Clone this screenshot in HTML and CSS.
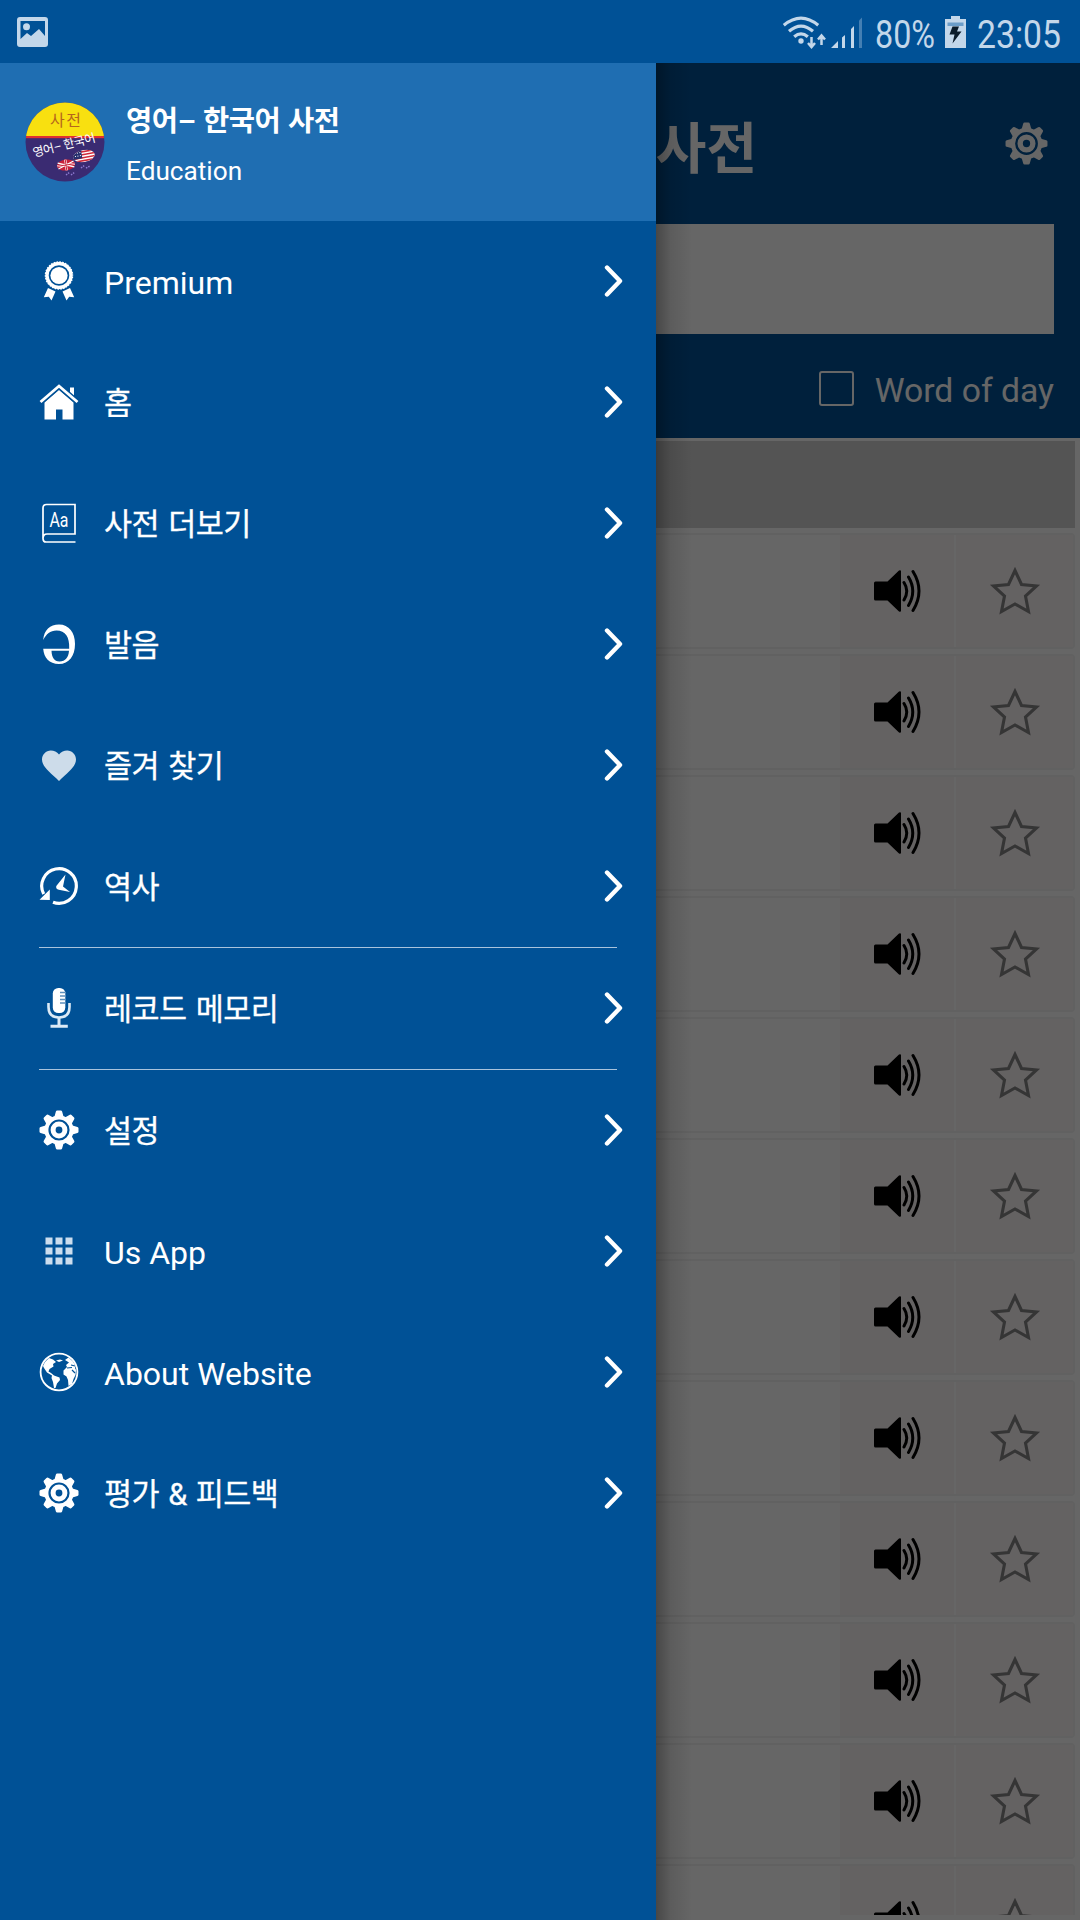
FILE: index.html
```html
<!DOCTYPE html>
<html lang="ko">
<head>
<meta charset="utf-8">
<title>영어– 한국어 사전</title>
<link rel="stylesheet" href="styles.css">
</head>
<body>
<svg class="defs" aria-hidden="true">
  <symbol id="gear" viewBox="0 0 40 40">
    <g fill="currentColor">
      <path id="tooth" d="M14.800 9L16.900 1.600Q17.200.5 18.200.5H21.800Q22.800.5 23.100 1.600L25.200 9Z"/>
      <use href="#tooth" transform="rotate(45 20 20)"/><use href="#tooth" transform="rotate(90 20 20)"/>
      <use href="#tooth" transform="rotate(135 20 20)"/><use href="#tooth" transform="rotate(180 20 20)"/>
      <use href="#tooth" transform="rotate(225 20 20)"/><use href="#tooth" transform="rotate(270 20 20)"/>
      <use href="#tooth" transform="rotate(315 20 20)"/>
    </g>
    <circle cx="20" cy="20" r="12.600" fill="none" stroke="currentColor" stroke-width="4"/>
    <circle cx="20" cy="20" r="5.900" fill="none" stroke="currentColor" stroke-width="5"/>
  </symbol>
  <symbol id="chevron" viewBox="0 0 20 34">
    <path d="M4 3.500L17 17 4 30.500" fill="none" stroke="currentColor" stroke-width="4.400" stroke-linecap="round" stroke-linejoin="round"/>
  </symbol>
  <symbol id="speaker" viewBox="0 0 50 44">
    <path d="M2.500 12.500H14.500L26 1.500Q28 .5 28 2.500V41.500Q28 43.500 26 42.500L14.500 31.500H2.500Q1 31.500 1 30V14Q1 12.500 2.500 12.500Z"/>
    <path d="M31 13.500Q36.500 22 31 31M35.500 8Q44 22 35.500 36.500M40 2.500Q52 22 40 41.500" fill="none" stroke="#000" stroke-width="3" stroke-linecap="round"/>
  </symbol>
  <symbol id="star" viewBox="0 0 52 50">
    <path d="M26 4.500L32.500 18.500 47.500 20 36.500 30 39.500 45.500 26 38 12.500 45.500 15.500 30 4.500 20 19.500 18.500Z" fill="none" stroke="#858585" stroke-width="3.100" stroke-miterlimit="10"/>
  </symbol>
</svg>

<header class="status">
  <svg class="status-photo" viewBox="0 0 32 30" width="32" height="30">
    <path fill="currentColor" fill-rule="evenodd" d="M3 0H28Q31 0 31 3V27Q31 30 28 30H3Q0 30 0 27V3Q0 0 3 0ZM3.500 4V22L10 16 14 19 22 12 28 19V4Z"/>
    <circle cx="9.500" cy="9.800" r="3.500" fill="currentColor"/>
  </svg>
  <div class="status-right">
    <svg viewBox="0 0 42 32" width="42" height="32">
      <g fill="none" stroke="currentColor" stroke-width="3.200">
        <path d="M.8 8.200Q18-6 35.200 8.200M6 14.300Q18 4 30 14.300M11.200 19.800Q18 14 24.800 19.800"/>
      </g>
      <circle cx="18" cy="24" r="2.700" fill="currentColor"/>
      <path d="M28.500 20V29M25 26L28.500 30 32 26M38.500 28V19.500M35 22.500L38.500 18.500 42 22.500" fill="none" stroke="currentColor" stroke-width="2.500"/>
    </svg>
    <svg class="signal" viewBox="0 0 32 31" width="32" height="31">
      <path fill="currentColor" d="M0 31L7 24V31ZM11 20.500L14 18V31H11ZM20 12L23 9V31H20Z"/>
      <path fill="currentColor" opacity=".35" d="M28 3.500L31 .5V31H28Z"/>
    </svg>
    <svg class="battery-text" width="61" height="52"><text x="0" y="37" textLength="60" lengthAdjust="spacingAndGlyphs">80%</text></svg>
    <svg class="battery" viewBox="0 0 21 32" width="21" height="32">
      <path fill="currentColor" d="M6 0H15V3H21V32H0V3H6Z"/>
      <path fill="#6b9dc9" d="M2.500 6.500H18.500V10H2.500Z"/>
      <path fill="#0b1c2b" d="M7.500 10.500H14L12 15.500H16.500L7.500 27.500 9.500 18.500H4.500Z"/>
    </svg>
    <svg class="clock" width="85" height="52"><text x="0" y="37" textLength="84" lengthAdjust="spacingAndGlyphs">23:05</text></svg>
  </div>
</header>

<div class="screen">
  <main class="page">
    <section class="top">
      <div class="title-row"><h1>영어– 한국어 사전</h1><svg class="top-gear"><use href="#gear"/></svg></div>
      <div class="search"></div>
      <label class="word-day"><span class="box"></span>Word of day</label>
    </section>
    <section class="list">
      <div class="list-head"></div>
      <div class="row"><div class="word"></div><div class="btn say"><svg><use href="#speaker"/></svg></div><div class="btn fav"><svg><use href="#star"/></svg></div></div>
      <div class="row"><div class="word"></div><div class="btn say"><svg><use href="#speaker"/></svg></div><div class="btn fav"><svg><use href="#star"/></svg></div></div>
      <div class="row"><div class="word"></div><div class="btn say"><svg><use href="#speaker"/></svg></div><div class="btn fav"><svg><use href="#star"/></svg></div></div>
      <div class="row"><div class="word"></div><div class="btn say"><svg><use href="#speaker"/></svg></div><div class="btn fav"><svg><use href="#star"/></svg></div></div>
      <div class="row"><div class="word"></div><div class="btn say"><svg><use href="#speaker"/></svg></div><div class="btn fav"><svg><use href="#star"/></svg></div></div>
      <div class="row"><div class="word"></div><div class="btn say"><svg><use href="#speaker"/></svg></div><div class="btn fav"><svg><use href="#star"/></svg></div></div>
      <div class="row"><div class="word"></div><div class="btn say"><svg><use href="#speaker"/></svg></div><div class="btn fav"><svg><use href="#star"/></svg></div></div>
      <div class="row"><div class="word"></div><div class="btn say"><svg><use href="#speaker"/></svg></div><div class="btn fav"><svg><use href="#star"/></svg></div></div>
      <div class="row"><div class="word"></div><div class="btn say"><svg><use href="#speaker"/></svg></div><div class="btn fav"><svg><use href="#star"/></svg></div></div>
      <div class="row"><div class="word"></div><div class="btn say"><svg><use href="#speaker"/></svg></div><div class="btn fav"><svg><use href="#star"/></svg></div></div>
      <div class="row"><div class="word"></div><div class="btn say"><svg><use href="#speaker"/></svg></div><div class="btn fav"><svg><use href="#star"/></svg></div></div>
      <div class="row"><div class="word"></div><div class="btn say"><svg><use href="#speaker"/></svg></div><div class="btn fav"><svg><use href="#star"/></svg></div></div>
    </section>
  </main>
  <div class="scrim"></div>

  <nav class="drawer">
    <div class="profile">
      <svg class="avatar" viewBox="0 0 80 80">
        <clipPath id="disc"><circle cx="40" cy="40" r="39.500"/></clipPath>
        <g clip-path="url(#disc)">
          <rect width="80" height="80" fill="#3a2b72"/>
          <rect width="80" height="34" fill="#f8e010"/>
          <rect y="34" width="80" height="2.200" fill="#e03030"/>
        </g>
        <text class="av-top" x="25" y="23.500" textLength="31">사전</text>
        <text class="av-name" x="9" y="55" textLength="64" transform="rotate(-14 9 55)">영어– 한국어</text>
        <g transform="rotate(-8 41 63)">
          <ellipse cx="41" cy="63" rx="9" ry="5.500" fill="#c8203a"/>
          <path d="M33 60L49 66M33 66L49 60" stroke="#fff" stroke-width="1.200"/>
          <path d="M41 57.500V68.500M32 63H50" stroke="#fff" stroke-width="2.200"/>
          <path d="M41 57.500V68.500M32 63H50" stroke="#c8203a" stroke-width="1"/>
        </g>
        <g transform="rotate(-10 59 54)">
          <clipPath id="us"><ellipse cx="59" cy="54" rx="11" ry="6"/></clipPath>
          <g clip-path="url(#us)"><rect x="48" y="48" width="22" height="12" fill="#fff"/>
          <path d="M48 49.500H70M48 52.500H70M48 55.500H70M48 58.500H70" stroke="#d02a3a" stroke-width="1.500"/>
          <rect x="48" y="48" width="9" height="8" fill="#26306e"/><path d="M50 50H56M50 53H56" stroke="#fff" stroke-dasharray="1 1.500"/></g>
        </g>
        <path d="M41 73L45 70M46 73L50 70M56 66L60 63M61 66L65 64" stroke="#8e7ad0" stroke-width="1.500" stroke-dasharray="1.500 1"/>
      </svg>
      <div><div class="app-name">영어– 한국어 사전</div><div class="category">Education</div></div>
    </div>

    <a class="item"><svg class="icon" viewBox="0 0 40 40">
      <circle cx="20" cy="14.500" r="12.300" fill="none" stroke="#fff" stroke-width="4"/>
      <circle cx="20" cy="14.500" r="14.300" fill="none" stroke="#005196" stroke-width="1.300" stroke-dasharray="1.300 1.700"/>
      <circle cx="20" cy="14.500" r="8.600" fill="#fff"/>
      <path fill="#fff" d="M9 27L16.500 30.500 12.500 39.500 9.800 35.800 4.800 36.300ZM31 27L23.500 30.500 27.500 39.500 30.200 35.800 35.200 36.300Z"/>
    </svg><span>Premium</span><svg class="go"><use href="#chevron"/></svg></a>

    <a class="item"><svg class="icon" viewBox="0 0 40 40">
      <path fill="#fff" d="M31 5.500H35V17L31 13ZM5.500 20.500L20 8 34.500 20.500V37.500H23.500V27.500H17V37.500H5.500Z"/>
      <path d="M1.500 20L20 4 38.500 20" fill="none" stroke="#005196" stroke-width="5.500"/>
      <path d="M1.500 20L20 4 38.500 20" fill="none" stroke="#fff" stroke-width="2.800"/>
    </svg><span class="ko">홈</span><svg class="go"><use href="#chevron"/></svg></a>

    <a class="item"><svg class="icon" viewBox="0 0 40 40">
      <path d="M36.500 39H7Q4 39 4 35.500V5Q4 1.500 7.500 1.500H36V31H8Q4 31 4 35.500" fill="none" stroke="#fff" stroke-width="1.700"/>
      <text class="aa" x="10.500" y="23.500" textLength="19" lengthAdjust="spacingAndGlyphs">Aa</text>
    </svg><span class="ko">사전 더보기</span><svg class="go"><use href="#chevron"/></svg></a>

    <a class="item"><svg class="icon" viewBox="0 0 40 40">
      <path fill="#fff" fill-rule="evenodd" d="M4.200 16C5 6 11 .5 20 .5C30 .5 36 8.500 36 20C36 32 30 40 20 40C10 40 5 34 4.200 24.800H30.200C30.700 13 26.500 6.500 17.500 6.500C11 6.500 7.500 10 4.200 16ZM12.500 26.800C12.800 33.500 15 37.500 20.500 37.500C26.500 37.500 29.500 33.500 30 26.800Z"/>
    </svg><span class="ko">발음</span><svg class="go"><use href="#chevron"/></svg></a>

    <a class="item"><svg class="icon" viewBox="0 0 40 40">
      <path fill="#cddcea" d="M20 36L17.500 33.500C8.500 25.500 3 20.500 3 14.500C3 9.500 7 5.500 11.800 5.500C15 5.500 18 7 20 9.500C22 7 25 5.500 28.200 5.500C33 5.500 37 9.500 37 14.500C37 20.500 31.500 25.500 22.500 33.500Z"/>
    </svg><span class="ko">즐겨 찾기</span><svg class="go"><use href="#chevron"/></svg></a>

    <a class="item"><svg class="icon" viewBox="0 0 40 40">
      <path d="M14 36.200A17.300 17.300 0 1 0 4.700 28" fill="none" stroke="#fff" stroke-width="3.200"/>
      <path fill="#fff" d="M.5 33.800L10.800 23.500V34ZM26.500 8.500L24 20.500 31 26 19.800 23.800Q16.500 23 17.300 20Z"/>
    </svg><span class="ko">역사</span><svg class="go"><use href="#chevron"/></svg></a>

    <hr>
    <a class="item"><svg class="icon" viewBox="0 0 40 40">
      <rect x="13.800" y="0" width="12.500" height="25" rx="5.500" fill="#fff"/>
      <path d="M21 4.500H27M21 8H27M21 11.500H27M21 15H27" stroke="#5c8fbc" stroke-width="1.300"/>
      <path d="M9.500 15V19Q9.500 29.500 20 29.500T30.500 19V15" fill="none" stroke="#dceaf6" stroke-width="2.600"/>
      <path d="M20 29V38M11.500 38.300H28.800" stroke="#dceaf6" stroke-width="3" fill="none"/>
    </svg><span class="ko">레코드 메모리</span><svg class="go"><use href="#chevron"/></svg></a>
    <hr>

    <a class="item"><svg class="icon"><use href="#gear"/></svg><span class="ko">설정</span><svg class="go"><use href="#chevron"/></svg></a>

    <a class="item"><svg class="icon" viewBox="0 0 40 40">
      <path fill="#ccddee" d="M6.500 6.500h7v7h-7zM16.500 6.500h7v7h-7zM26.500 6.500h7v7h-7zM6.500 16.500h7v7h-7zM16.500 16.500h7v7h-7zM26.500 16.500h7v7h-7zM6.500 26.500h7v7h-7zM16.500 26.500h7v7h-7zM26.500 26.500h7v7h-7z"/>
    </svg><span>Us App</span><svg class="go"><use href="#chevron"/></svg></a>

    <a class="item"><svg class="icon" viewBox="0 0 40 40">
      <circle cx="20" cy="20" r="18.400" fill="none" stroke="#fff" stroke-width="1.800"/>
      <path fill="#fff" d="M4 14Q6 9 10 6L14 7.500 17 10 14 12 14.500 14.500 10.500 17 9.500 19.500 12 21 15 23.500 20.500 25.500 21 28 18 31.500 16.500 36 15 36 14 30 12.500 26 13 23.500 8 20.500 5 16ZM17 8.500L21 7.500 24 8.500 20 10ZM26 8L29.500 5.500 34 9.500 36.500 14 36 16 37 18 36.500 23 34.500 27 33 32 29.500 34 29 28 27.500 24.500 24.500 22.500 24.500 18.500 28 15 27 13 30 10.500Z"/>
      <path d="M28 16L33 15.500M32 13L36 14M33 18L36 21" stroke="#005196" stroke-width="1.200"/>
    </svg><span>About Website</span><svg class="go"><use href="#chevron"/></svg></a>

    <a class="item"><svg class="icon"><use href="#gear"/></svg><span class="ko">평가 &amp; 피드백</span><svg class="go"><use href="#chevron"/></svg></a>
  </nav>
</div>
</body>
</html>
```

FILE: styles.css
```css
* { box-sizing: border-box; }
body {
  margin: 0;
  width: 1080px;
  height: 1920px;
  overflow: hidden;
  display: flex;
  flex-direction: column;
  background: #005196;
  color: #fff;
  font-family: Roboto, "Noto Sans CJK KR", sans-serif;
}
svg { display: block; flex: none; }
.defs { position: absolute; width: 0; height: 0; }

/* status bar */
.status {
  flex: none;
  height: 63px;
  display: flex;
  justify-content: space-between;
  align-items: flex-start;
  padding: 0 18px 0 17px;
  color: #c3d7ea;
}
.status-photo { margin-top: 17px; }
.status-right { display: flex; align-items: flex-start; padding-top: 11px; }
.status-right > svg { overflow: visible; }
.status-right > svg:first-child { margin-top: 6px; }
.status-right text { font-size: 39px; fill: currentColor; }
.signal { margin: 6px 0 0 6px; }
.battery-text { margin-left: 12px; }
.battery { margin: 5px 11px 0 9px; }

.screen { flex: 1; position: relative; overflow: hidden; }

/* page under the drawer */
.page { height: 1857px; display: flex; flex-direction: column; background: #fff; }
.top {
  flex: none;
  height: 375px;
  padding: 0 26px;
  background: #005196;
}
.title-row {
  height: 161px;
  display: flex;
  align-items: center;
  padding: 0 6px 0 320px;
  justify-content: space-between;
}
h1 {
  margin: 0;
  padding-top: 1px;
  width: 411px;
  display: flex;
  justify-content: flex-end;
  font-size: 55px;
  font-weight: 700;
  white-space: nowrap;
}
.top-gear { width: 43px; height: 43px; }
.search { height: 110px; background: #fff; }
.word-day {
  height: 104px;
  display: flex;
  justify-content: flex-end;
  align-items: center;
  padding-top: 8px;
  gap: 21px;
  font-size: 33.700px;
}
.box { width: 35px; height: 35px; border: 2px solid #fff; border-radius: 3px; margin-top: -4px; }
.list {
  flex: none;
  height: 1477px;
  overflow: hidden;
  padding: 3px 5px 0 4px;
}
.list-head { height: 87px; background: #d3d3d3; margin-bottom: 5px; }
.row {
  height: 116px;
  margin-bottom: 5px;
  display: flex;
  border: 2px solid #f3f3f3;
  border-radius: 4px;
}
.word { flex: 1; }
.btn { display: flex; align-items: center; justify-content: center; background: #fbf4f6; }
.say { width: 114px; }
.say svg { width: 50px; height: 44px; margin-left: 2px; }
.fav { width: 117px; margin-left: 2px; }
.fav svg { width: 52px; height: 50px; }

.scrim { position: absolute; inset: 0; background: rgba(0, 0, 0, .6); }

/* drawer */
.drawer {
  position: absolute;
  left: 0;
  top: 0;
  width: 656px;
  height: 100%;
  background: #005196;
}
.drawer::after {
  content: "";
  position: absolute;
  left: 100%;
  top: 0;
  width: 36px;
  height: 100%;
  background: linear-gradient(to right, rgba(0, 0, 0, .3), rgba(0, 0, 0, .1) 40%, transparent);
}
.profile {
  height: 158px;
  display: flex;
  align-items: center;
  gap: 21px;
  padding: 5px 0 0 25px;
  background: #1f6eb2;
}
.avatar { width: 80px; height: 80px; margin-top: -5px; }
.av-top { font-size: 16px; fill: #b5651d; }
.av-name { font-size: 12px; fill: #fff; }
.app-name { font-size: 28.500px; line-height: 40px; font-weight: 700; letter-spacing: -.4px; word-spacing: 1px; white-space: nowrap; }
.category { font-size: 26.200px; line-height: 34px; margin-top: 12px; }
.item { height: 121px; display: flex; align-items: center; padding: 0 33px 0 38.500px; }
.item .icon { width: 40px; height: 40px; margin-top: -1px; }
.item span { flex: 1; margin-left: 25.500px; font-size: 32px; line-height: 40px; padding-top: 3px; white-space: nowrap; }
.item .ko { font-size: 30.500px; letter-spacing: -.5px; word-spacing: 2px; -webkit-text-stroke: .3px #fff; }
.go { width: 20px; height: 34px; margin-top: -2px; }
.aa { font-size: 20px; fill: #fff; }
hr { height: 1px; margin: 0 39px; border: 0; background: #a9c3dc; }
```
